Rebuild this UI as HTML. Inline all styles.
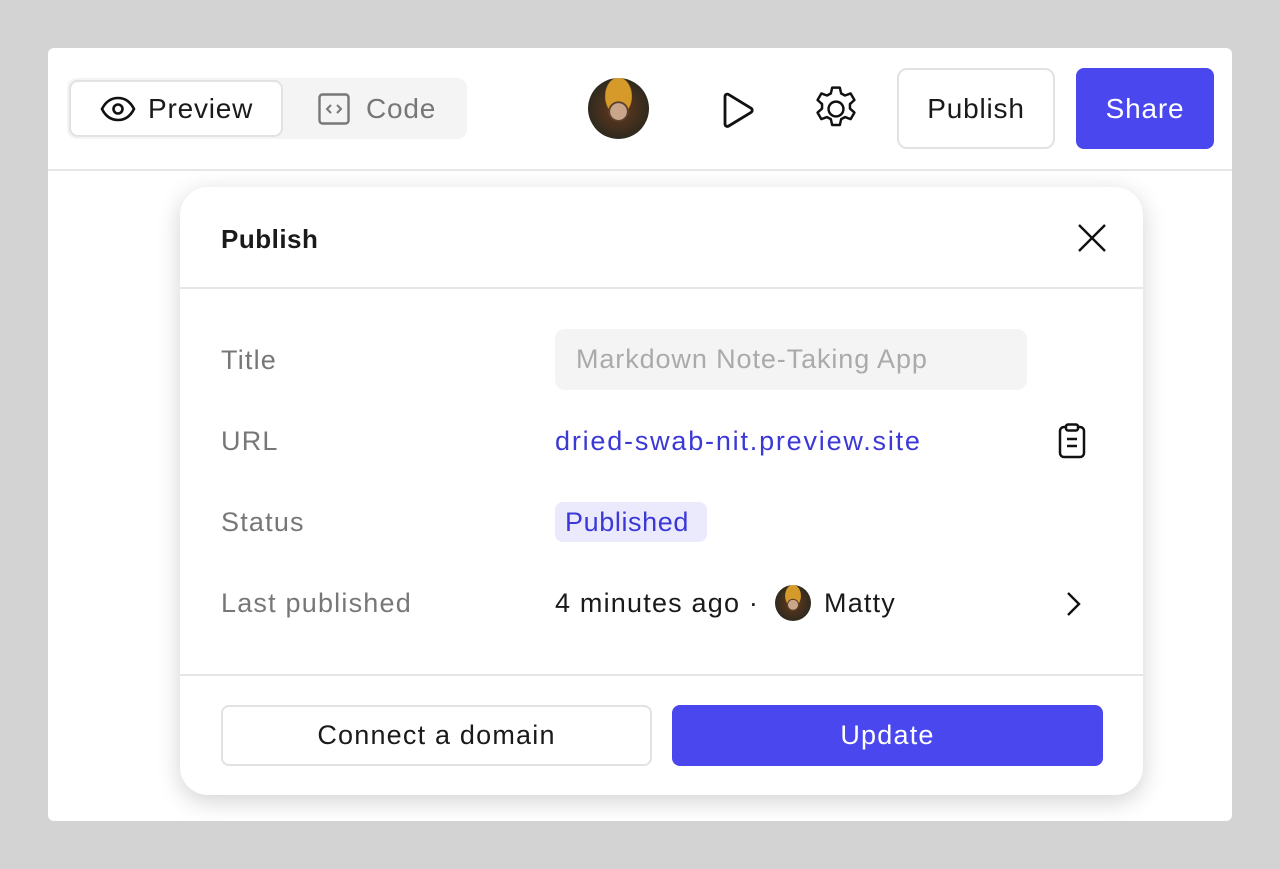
<!DOCTYPE html>
<html><head><meta charset="utf-8"><style>
*{box-sizing:border-box;margin:0;padding:0}
body{width:1280px;height:869px;background:#d3d3d3;font-family:"Liberation Sans",sans-serif;position:relative;overflow:hidden;color:#1a1a1a}
.card{position:absolute;left:48px;top:48px;width:1184px;height:773px;background:#fff;border-radius:6px}
.hdr{position:absolute;left:0;top:0;width:1184px;height:123px;border-bottom:2px solid #e6e6e6}
.abs{position:absolute}
.seg{left:19px;top:30px;width:400px;height:61px;background:#f4f4f4;border-radius:10px}
.prev{left:21px;top:32px;width:214px;height:57px;background:#fff;border:2px solid #e2e2e2;border-radius:9px}
.t26{font-size:28px;line-height:1;letter-spacing:0.8px}
.btn{border-radius:8px;display:flex;align-items:center;justify-content:center;font-size:28px;letter-spacing:0.8px}
.modal{position:absolute;left:180px;top:187px;width:963px;height:608px;background:#fff;border-radius:28px;box-shadow:0 6px 24px rgba(0,0,0,.18);letter-spacing:1.2px;font-size:27px}
.modal .btn{letter-spacing:1.2px;font-size:27px}
.lbl{color:#777;font-size:27px;position:absolute;left:41px}
.av{background:radial-gradient(circle at 50% 55%,#c9a58a 0 18%,#5a4030 19% 22%,transparent 23%),radial-gradient(ellipse at 50% 30%,#d59a2a 0 30%,transparent 32%),radial-gradient(circle,#6a3a1c 0,#2f2a1e 70%)}
</style></head><body>
<div class="card">
 <div class="hdr">
  <div class="abs seg"></div>
  <div class="abs prev"></div>
  <svg class="abs" style="left:52px;top:48px" width="36" height="26" viewBox="0 0 36 26"><path d="M2 13C6 5 12 2 18 2s12 3 16 11c-4 8-10 11-16 11S6 21 2 13z" fill="none" stroke="#111" stroke-width="2.6"/><circle cx="18" cy="13" r="4.5" fill="none" stroke="#111" stroke-width="2.6"/></svg>
  <div class="abs t26" style="left:100px;top:47px">Preview</div>
  <svg class="abs" style="left:270px;top:45px" width="32" height="32" viewBox="0 0 32 32"><rect x="1.5" y="1.5" width="29" height="29" rx="3" fill="none" stroke="#777" stroke-width="2.4"/><path d="M13 12l-4 4 4 4M19 12l4 4-4 4" fill="none" stroke="#777" stroke-width="2"/></svg>
  <div class="abs t26" style="left:318px;top:47px;color:#777">Code</div>
  <div class="abs av" style="left:540px;top:30px;width:61px;height:61px;border-radius:50%"></div>
  <svg class="abs" style="left:672px;top:43px" width="36" height="38" viewBox="0 0 36 38"><path d="M5 5.5C5 3.5 7 2.5 8.7 3.6L31 17.2c1.6 1 1.6 3.2 0 4.2L8.7 35C7 36 5 35 5 33z" fill="none" stroke="#111" stroke-width="2.8" stroke-linejoin="round"/></svg>
  <svg class="abs" style="left:761px;top:34px" width="54" height="54" viewBox="0 0 24 24"><path d="M10.3 2.5h3.4l.6 2.6 1.7.9 2.5-.9 1.7 2.9-2 1.8v2l2 1.8-1.7 2.9-2.5-.9-1.7.9-.6 2.6h-3.4l-.6-2.6-1.7-.9-2.5.9-1.7-2.9 2-1.8v-2l-2-1.8 1.7-2.9 2.5.9 1.7-.9z" fill="none" stroke="#111" stroke-width="1.1" stroke-linejoin="round"/><circle cx="12" cy="12" r="3.3" fill="none" stroke="#111" stroke-width="1.1"/></svg>
  <div class="abs btn" style="left:849px;top:20px;width:158px;height:81px;border:2px solid #e2e2e2;border-radius:10px">Publish</div>
  <div class="abs btn" style="left:1028px;top:20px;width:138px;height:81px;background:#4a47ef;color:#fff;border-radius:8px">Share</div>
 </div>
</div>
<div class="modal">
 <div class="abs" style="left:41px;top:37px;font-size:26px;font-weight:bold;color:#1a1a1a;letter-spacing:0.5px">Publish</div>
 <svg class="abs" style="left:897px;top:36px" width="30" height="30" viewBox="0 0 30 30"><path d="M2 2l26 26M28 2L2 28" stroke="#111" stroke-width="2.4"/></svg>
 <div class="abs" style="left:0;top:100px;width:963px;height:2px;background:#e6e6e6"></div>
 <div class="lbl" style="top:158px">Title</div>
 <div class="abs" style="left:375px;top:142px;width:472px;height:61px;background:#f4f4f4;border-radius:10px;color:#aaa;padding:15px 21px;letter-spacing:0.9px">Markdown Note-Taking App</div>
 <div class="lbl" style="top:239px">URL</div>
 <div class="abs" style="left:375px;top:239px;color:#3b38d6;letter-spacing:1.8px">dried-swab-nit.preview.site</div>
 <svg class="abs" style="left:878px;top:236px" width="28" height="36" viewBox="0 0 28 36"><rect x="2" y="4" width="24" height="30" rx="4" fill="none" stroke="#111" stroke-width="2.5"/><rect x="8" y="1.5" width="12" height="6" rx="2" fill="#fff" stroke="#111" stroke-width="2.5"/><path d="M9 16h10M9 23h10" stroke="#111" stroke-width="2.5"/></svg>
 <div class="lbl" style="top:320px">Status</div>
 <div class="abs" style="left:375px;top:315px;width:152px;height:40px;background:#ebeafd;border-radius:8px;color:#3b38d6;padding:5px 10px;letter-spacing:0.6px">Published</div>
 <div class="lbl" style="top:401px">Last published</div>
 <div class="abs" style="left:375px;top:401px;color:#1a1a1a">4 minutes ago ·</div>
 <div class="abs av" style="left:595px;top:398px;width:36px;height:36px;border-radius:50%"></div>
 <div class="abs" style="left:644px;top:401px">Matty</div>
 <svg class="abs" style="left:885px;top:404px" width="16" height="26" viewBox="0 0 16 26"><path d="M3 2l11 11L3 24" fill="none" stroke="#111" stroke-width="2.4"/></svg>
 <div class="abs" style="left:0;top:487px;width:963px;height:2px;background:#e6e6e6"></div>
 <div class="abs btn" style="left:41px;top:518px;width:431px;height:61px;border:2px solid #e2e2e2;border-radius:8px">Connect a domain</div>
 <div class="abs btn" style="left:492px;top:518px;width:431px;height:61px;background:#4a47ef;color:#fff;border-radius:8px">Update</div>
</div>
</body></html>
